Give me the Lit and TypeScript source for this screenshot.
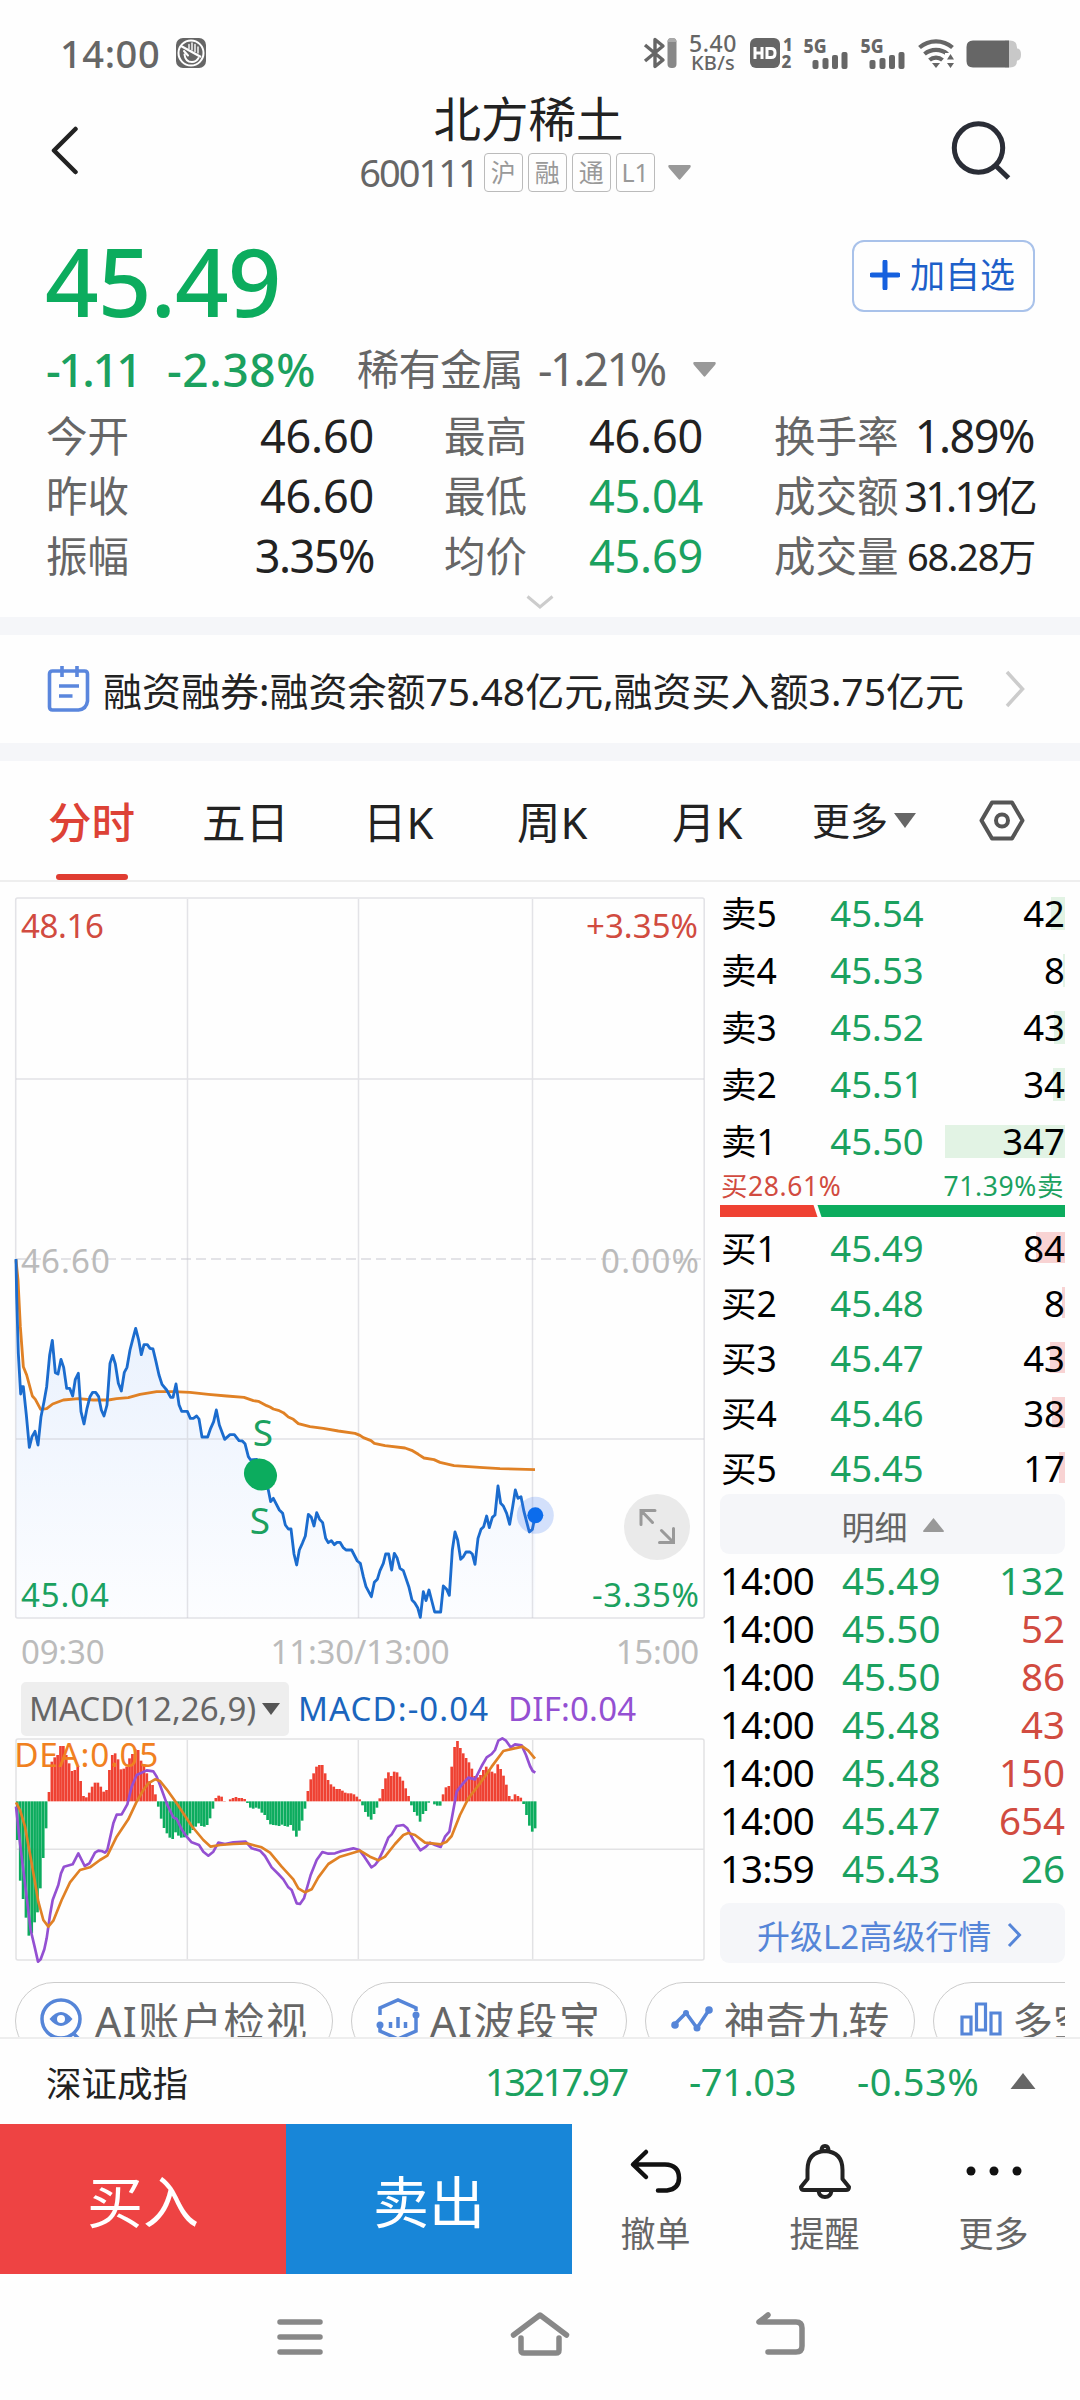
import { LitElement, html, css, svg } from "lit";
import { customElement } from "lit/decorators.js";

type Pair = [number, number];

const parse = (s: string, dx = 0): Pair[] =>
  s.trim().split(/\s+/).map((p) => {
    const [x, y] = p.split(",").map(Number);
    return [x + dx, y] as Pair;
  });
const join = (pts: Pair[]) => pts.map((p) => p.join(",")).join(" ");

// Series are stored in third-of-a-pixel units; the afternoon part starts at x = 810.
const PRICE = [
  ...parse(`48,87 50,200 55,370 62,492 66,470 70,470 79,555 88,652 96,620 105,604 114,645 123,560 132,515 140,470
149,375 157,331 166,428 174,432 183,388 191,412 200,475 209,475 218,498 226,448 235,430 243,545 252,582 261,535
270,500 278,487 287,487 296,500 304,540 312,558 321,525 330,400 338,376 346,402 355,460 364,483 373,427 381,412
390,360 399,325 407,295 416,330 424,374 432,344 442,344 450,355 459,357 468,395 477,435 486,463 500,480 512,502
519,502 528,462 537,524 545,544 562,544 571,565 580,565 590,558 597,567 606,621 623,621 632,595 641,575 649,540
658,585 674,628 690,614 703,614 717,632 727,633 735,641 745,680 752,690 770,688 788,735 805,780`),
  ...parse(`2,815 10,805 28,840 38,850 46,885 55,897 63,897 72,972 80,1005 88,960 97,940 106,918 115,853 124,862
132,888 140,848 149,868 158,878 167,925 175,938 184,932 193,944 201,937 210,937 219,952 228,960 245,960 262,993
271,1000 280,1040 288,1070 304,1100 313,1057 322,1048 330,1022 340,1000 347,972 356,972 365,1020 373,970 381,983
390,1015 400,1022 417,1072 426,1110 434,1118 443,1133 451,1162 460,1085 468,1112 477,1080 494,1146 512,1146
520,1068 530,1078 538,1096 547,960 555,906 563,930 572,988 580,980 588,966 600,966 607,972 615,1003 624,925
633,898 641,890 650,858 658,893 667,862 675,855 684,768 692,820 700,828 710,850 719,883 728,830 736,780 744,805
753,800 762,845 778,906 787,898 796,856`, 810),
];
const AVERAGE = [
  ...parse(`48,90 54,150 61,290 70,410 80,435 97,498 106,508 122,538 140,536 158,522 190,510 235,506 280,510
325,510 350,506 385,503 420,493 470,485 520,485 570,487 625,493 680,498 732,502 760,512 775,514 800,527`),
  ...parse(`0,531 10,537 25,541 40,548 55,561 70,568 85,581 120,590 160,595 205,603 255,610 270,616 280,623
303,632 313,640 345,647 405,654 425,661 445,673 462,684 492,689 510,697 552,707 640,713 690,716 795,719`, 810),
];
const DIF = [
  ...parse(`48,410 60,520 75,640 92,780 105,835 114,875 122,868 133,838 140,805 150,735 158,690 175,645 183,610
192,590 218,583 235,550 254,588 268,580 285,548 295,542 305,543 315,548 322,540 340,460 350,434 365,433 382,403
395,350 410,315 440,301 460,304 470,320 480,345 500,400 520,442 530,447 545,478 560,500 575,517 597,525 610,545
625,557 640,545 655,518 675,522 700,517 737,515 755,535 780,542 795,558 815,592 835,612`),
  ...parse(`40,628 55,652 65,660 80,700 90,702 102,685 122,615 140,570 157,546 175,551 195,550 215,543 250,535
268,540 283,560 304,592 315,585 325,572 340,540 355,503 365,493 380,468 400,465 412,475 430,510 451,541 468,530
480,518 495,525 512,531 525,500 538,485 550,420 560,365 575,345 595,323 615,328 635,288 650,262 665,252 675,240
685,212 697,205 708,212 722,232 735,223 755,226 768,255 780,288 788,303 796,308`, 810),
];
const DEA = [
  ...parse(`48,397 60,420 75,470 95,580 115,695 130,750 145,770 160,752 185,690 210,637 240,600 270,592 300,570
322,557 350,500 385,448 410,395 430,360 445,340 465,328 480,333 500,358 530,400 575,468 610,510 632,530 660,525
700,522 740,520 785,532`),
  ...parse(`0,548 35,590 70,628 85,655 105,667 125,658 145,622 175,582 210,560 270,542 300,560 325,571 345,560
375,522 400,495 415,489 435,495 465,518 512,523 530,515 545,498 570,435 595,385 630,340 665,290 700,243 730,236
758,230 775,242 795,266`, 810),
];
const ZERO = 394;
const BAR = 8.63;
const HISTOGRAM = `510 632 687 743 797 790 757 727 655 564 475
366 275 262 255 228 228 255 280 303 300 290 333 378 382 368 350 338 338 350 365 360 300 255 250 268 298 296 290 265
252 238 240 272 285 310 333 345 373
410 446 474 490 503 507 487 497 503 502 497 490 480 470 460 468 470 465 445 416
384 377 380 393 394 388 384 381 384 384 387
399 413 416 413 416 428 435 450 463 465 466 468 464 468 470 465 482 500 482 452 416
363 328 310 290 285 285 310 330 343 350 357 357 362 368 370 370 373 380 388
406 426 440 449 432 413
385 357 325 307 318 305 307 320 332 355 378
406 426 437 455 432 423 398 394 403 407 407
373 352 348 290 231 213 234 250 264 277 296 318 322 315 300 290 298 305 310 283 297 317 344 378 388 373 378 383
402 435 467 485 475`.split(/\s+/).map(Number);

const SELLS = [
  ["卖5", "45.54", "42", 14], ["卖4", "45.53", "8", 2], ["卖3", "45.52", "43", 11],
  ["卖2", "45.51", "34", 12], ["卖1", "45.50", "347", 120],
] as const;
const BUYS = [
  ["买1", "45.49", "84", 29], ["买2", "45.48", "8", 3], ["买3", "45.47", "43", 15],
  ["买4", "45.46", "38", 13], ["买5", "45.45", "17", 6],
] as const;
const TRADES = [
  ["14:00", "45.49", "132", "g"], ["14:00", "45.50", "52", "r"], ["14:00", "45.50", "86", "r"],
  ["14:00", "45.48", "43", "r"], ["14:00", "45.48", "150", "r"], ["14:00", "45.47", "654", "r"],
  ["13:59", "45.43", "26", "g"],
] as const;

const base = css`
  * { box-sizing: border-box; }
  .g { color: #1ba15f; }
  .r { color: #d14b40; }
  svg { display: block; flex: none; }
`;

@customElement("status-bar")
class StatusBar extends LitElement {
  static styles = [base, css`
    :host { display: flex; height: 90px; padding: 16px 58px 0 60px; align-items: center; color: #666; }
    .time { font-size: 38px; font-weight: 500; line-height: 40px; letter-spacing: 0.6px; width: 116px; }
    .spacer { flex: 1; }
    .rate { width: 52px; margin: 0 11px 0 10px; display: flex; flex-direction: column; align-items: center; font-size: 23px; line-height: 20px; font-weight: 500; letter-spacing: 0.6px; }
    .unit { font-size: 20px; letter-spacing: 0.2px; }
    text { font-family: "Noto Sans", sans-serif; font-weight: 800; }
  `];
  signal() {
    return svg`<text x="0" y="16" font-size="19" textLength="23" lengthAdjust="spacingAndGlyphs">5G</text>
      <rect x="9" y="23" width="6" height="9" rx="2"/><rect x="19" y="21" width="6" height="11" rx="2"/>
      <rect x="28.5" y="18" width="6" height="14" rx="2"/><rect x="38" y="15" width="6" height="17" rx="2"/>`;
  }
  render() {
    return html`
      <div class="time">14:00</div>
      <svg width="30" height="30" viewBox="0 0 30 30">
        <rect width="30" height="30" rx="7" fill="#666"/>
        <circle cx="15" cy="15" r="12.500" fill="none" stroke="#fff" stroke-width="2"/>
        <path d="M5 8 25 19" stroke="#fff" stroke-width="2.200"/>
        <path d="M13 10.500V6.500M16 12V5M19 13.500V6.500M22 15V9" fill="none" stroke="#fff" stroke-width="1.400" stroke-linecap="round"/>
        <path d="M8 13l4 4.500M8.500 16.500c.5 5 3.500 7.500 7.500 7.500 3 0 5-1.500 6.500-4" fill="none" stroke="#fff" stroke-width="2" stroke-linecap="round"/>
      </svg>
      <div class="spacer"></div>
      <svg width="34" height="32" viewBox="0 0 34 32">
        <path d="M2 8 20 23 12 29.500V2.500L20 9 2 24" fill="none" stroke="#666" stroke-width="3.400" stroke-linejoin="round"/>
        <rect x="24.500" y="1" width="9" height="30" rx="4" fill="#888"/><path d="M24.500 5q0-4 4.500-4t4.500 4z" fill="#aaa"/>
      </svg>
      <div class="rate"><span>5.40</span><span class="unit">KB/s</span></div>
      <svg width="44" height="32" viewBox="0 0 44 32" fill="#666">
        <rect y="1" width="30" height="30" rx="6"/>
        <path d="M5 10v12M12 10v12M5 16h7M17 10v12M16 11.500h5q4 0 4 4v1q0 4-4 4h-4" fill="none" stroke="#fff" stroke-width="3"/>
        <text x="33" y="14" font-size="17">1</text><text x="31.500" y="31" font-size="17">2</text>
      </svg>
      <svg width="57" height="32" viewBox="-9.500 0 57 32" fill="#666">${this.signal()}</svg>
      <svg width="57" height="32" viewBox="-9.500 0 57 32" fill="#666">${this.signal()}</svg>
      <svg width="49" height="32" viewBox="-10 0 49 32" fill="none" stroke="#666" stroke-width="4.200">
        <path d="M1.500 10.500a25 25 0 0 1 33 0M6.500 17a18 18 0 0 1 23 0M11.500 23a10 10 0 0 1 13 0"/>
        <path d="M14 26h8l-4 5z" fill="#666" stroke="none"/><path d="M27 16h10v16H27z" fill="#fff" stroke="none"/>
        <path d="M29 22.500h7L32.500 17zM29 26h7l-3.500 5z" fill="#666" stroke="none"/>
      </svg>
      <svg width="65" height="32" viewBox="-8 0 65 32">
        <path d="M40 3.500h5q7 0 7 7v1h1q3 1 3 6t-3 6h-1q0 7-7 7h-5z" fill="#c8c8c8"/>
        <path d="M8 3.500h36v27H8q-6.500 0-6.500-6.500V10q0-6.500 6.500-6.500z" fill="#666"/>
      </svg>`;
  }
}

@customElement("stock-header")
class StockHeader extends LitElement {
  static styles = [base, css`
    :host { display: block; }
    .bar { height: 120px; display: flex; justify-content: space-between; padding: 0 69px 0 50px; }
    .mid { width: 500px; display: flex; flex-direction: column; align-items: center; padding-left: 26px; }
    .title { font-size: 47.500px; line-height: 57px; color: #222; }
    .sub { display: flex; align-items: center; gap: 5px; height: 50px; color: #666; font-size: 38px; line-height: 40px; margin: 0 0 0 -7px; }
    .code { letter-spacing: -2px; margin-right: 1px; }
    .tag { width: 39px; height: 39px; border: 1.500px solid #bbb; border-radius: 4px; color: #999; font-size: 25px; line-height: 36px; text-align: center; }
    .tri { margin-left: 8px; }
    .back { margin-top: 36px; } .search { margin-top: 34px; overflow: visible; }
    .price { display: flex; justify-content: space-between; padding: 30px 45px 0 45px; height: 126px; }
    .last { color: #0cac5e; font-size: 94px; font-weight: 500; line-height: 84px; letter-spacing: -1px; margin-top: -1px; }
    .add { width: 183px; height: 72px; border: 2px solid #a9c2ea; border-radius: 12px; display: flex; align-items: center; gap: 10px; padding-left: 16px; color: #1d5fc9; font-size: 35px; line-height: 60px; padding-bottom: 2px; }
    .chg { display: flex; align-items: center; height: 70px; padding: 0 0 4px 46px; font-size: 46px; line-height: 60px; }
    .d1 { width: 121px; letter-spacing: -2.400px; font-weight: 500; }
    .d2 { width: 190px; letter-spacing: 0.600px; font-weight: 500; }
    .ind { color: #666; font-size: 42px; margin-right: 15px; letter-spacing: -0.500px; }
    .ip { color: #666; font-size: 45px; letter-spacing: -2.400px; width: 155px; }
    .stats { display: grid; grid-template-columns: 328px 329px 331px; justify-content: start; grid-auto-rows: 60px; padding: 0 46px; height: 211px; }
    .cell { display: flex; justify-content: space-between; line-height: 60px; font-size: 45px; color: #222; white-space: nowrap; }
    .cell.b { padding-left: 70px; } .cell.c { padding-left: 71px; }
    .cell .l { font-size: 41.500px; color: #666; }
    .cell .g { color: #1ba15f; }
    .v { letter-spacing: -0.200px; }
    .v.p { letter-spacing: -1.500px; }
    .v.m { font-size: 41.500px; letter-spacing: -2.800px; margin-right: -1px; } .v.s { font-size: 38px; letter-spacing: -1.200px; margin-right: -1px; }
    .more { display: flex; justify-content: center; grid-column: 1 / 4; margin-top: 9px; height: 16px; }
    .band { height: 18px; background: #f5f6f9; }
    .notice { height: 108px; display: flex; align-items: center; padding: 0 55px 0 47px; font-size: 39px; color: #222; }
    .notice span { flex: 1; margin-left: 13px; white-space: nowrap; letter-spacing: 0; }
  `];
  cell(cls: string, l: string, v: string, vc = "") {
    return html`<div class="cell ${cls}"><span class="l">${l}</span><span class="v ${vc}">${v}</span></div>`;
  }
  render() {
    return html`
      <div class="bar">
        <svg class="back" width="30" height="50" viewBox="0 0 30 50"><path d="M25.500 3 4 24.500 25.500 46" fill="none" stroke="#222" stroke-width="4.500" stroke-linecap="round" stroke-linejoin="round"/></svg>
        <div class="mid">
          <div class="title">北方稀土</div>
          <div class="sub"><span class="code">600111</span><span class="tag">沪</span><span class="tag">融</span><span class="tag">通</span><span class="tag">L1</span>
            <svg class="tri" width="23" height="15"><path d="M1 0H22Q23.500 1 22 3L12.500 14Q11.500 15.500 10.500 14L1 3Q-.5 1 1 0" fill="#999"/></svg>
          </div>
        </div>
        <svg class="search" width="60" height="60" viewBox="0 0 60 60" fill="none" stroke="#2a2d36" stroke-width="5"><circle cx="27.500" cy="24" r="24.200"/><path d="M44 41 57.500 54"/></svg>
      </div>
      <div class="price">
        <div class="last">45.49</div>
        <div class="add"><svg width="30" height="30"><path d="M15 2v26M2 15h26" stroke="#1560de" stroke-width="5" stroke-linecap="round"/></svg>加自选</div>
      </div>
      <div class="chg">
        <span class="d1 g">-1.11</span><span class="d2 g">-2.38%</span><span class="ind">稀有金属</span><span class="ip">-1.21%</span>
        <svg width="23" height="15"><path d="M1 0H22Q23.500 1 22 3L12.500 14Q11.500 15.500 10.500 14L1 3Q-.5 1 1 0" fill="#999"/></svg>
      </div>
      <div class="stats">
        ${this.cell("", "今开", "46.60")}${this.cell("b", "最高", "46.60")}${this.cell("c", "换手率", "1.89%", "p")}
        ${this.cell("", "昨收", "46.60")}${this.cell("b", "最低", "45.04", "g")}${this.cell("c", "成交额", "31.19亿", "m")}
        ${this.cell("", "振幅", "3.35%", "p")}${this.cell("b", "均价", "45.69", "g")}${this.cell("c", "成交量", "68.28万", "s")}
        <div class="more"><svg width="28" height="16"><path d="M1.500 1.500 14 12 26.500 1.500" fill="none" stroke="#ccc" stroke-width="3"/></svg></div>
      </div>
      <div class="band"></div>
      <div class="notice">
        <svg width="43" height="48" viewBox="0 0 43 48" fill="none" stroke="#5a86dd" stroke-width="3.600"><path d="M2.500 9q0-3 3-3h32q3 0 3 3v27q-1 8-9 9h-26q-3 0-3-3z"/><path d="M15 1v11M30 1v11M12 21h20M12 31h13.500"/></svg>
        <span>融资融券:融资余额75.48亿元,融资买入额3.75亿元</span>
        <svg width="20" height="38"><path d="M2 2 17.500 19 2 36" fill="none" stroke="#ccc" stroke-width="3.500"/></svg>
      </div>
      <div class="band"></div>`;
  }
}

@customElement("chart-panel")
class ChartPanel extends LitElement {
  static styles = [base, css`
    :host { display: block; width: 705px; }
    .price, .macd { overflow: visible; }
    text { font-family: "Noto Sans", sans-serif; font-size: 33px; }
    .mark { font-size: 37px; }
    .dea { font-size: 100px; }
    .axis { display: flex; justify-content: space-between; height: 54px; padding: 0 6px 0 21px; line-height: 60px; font-size: 33px; color: #bbb; letter-spacing: -0.200px; }
    .legend { display: flex; height: 64px; padding: 6px 0 0 21px; font-size: 33px; line-height: 54px; }
    .chip { width: 268px; height: 54px; border-radius: 5px; background: #eee; color: #666; padding: 0 8px; display: flex; align-items: center; justify-content: space-between; }
    .m { color: #1b65bd; margin-left: 9px; width: 210px; letter-spacing: 1.100px; } .d { color: #9450d2; letter-spacing: 0.200px; }
  `];
  render() {
    const area = `${join(PRICE)} 1606,1164 48,1164`;
    return html`
      <svg class="price" width="705" height="740" viewBox="0 0 705 740">
        <defs><linearGradient id="fill" x1="0" y1="0" x2="0" y2="1"><stop offset="0" stop-color="#e6effd"/><stop offset="1" stop-color="#fcfdff"/></linearGradient></defs>
        <g transform="translate(0 348) scale(.33333)">
          <polygon points=${area} fill="url(#fill)"/>
        </g>
        <g fill="none" stroke="#c8c8cf" stroke-opacity=".5" stroke-width="1.500">
          <rect x="15.700" y="16" width="688.500" height="720" rx="2"/>
          <path d="M187.500 17v719M358.500 17v719M532.500 17v719M16 197h688M16 557h688"/>
          <path d="M16 377h688" stroke-dasharray="10 5" stroke-width="2"/>
        </g>
        <g transform="translate(0 348) scale(.33333)" fill="none" stroke-linejoin="round">
          <polyline points=${join(AVERAGE)} stroke="#e08125" stroke-width="8.500"/>
          <polyline points=${join(PRICE)} stroke="#1b6cce" stroke-width="8.500"/>
        </g>
        <text x="21" y="56" fill="#d14b40" textLength="83">48.16</text>
        <text x="698" y="56" fill="#d14b40" text-anchor="end" textLength="112">+3.35%</text>
        <text x="21" y="391" fill="#bbb" textLength="89">46.60</text>
        <text x="699" y="391" fill="#bbb" text-anchor="end" textLength="98">0.00%</text>
        <text x="21" y="725" fill="#1ba15f" textLength="88">45.04</text>
        <text x="699" y="725" fill="#1ba15f" text-anchor="end" textLength="107">-3.35%</text>
        <ellipse cx="260.500" cy="592.500" rx="17" ry="15.500" transform="rotate(35 260.500 592.500)" fill="#0cac5e"/>
        <text class="mark" x="263" y="564" text-anchor="middle" fill="#1ba15f">S</text>
        <text class="mark" x="260" y="652" text-anchor="middle" fill="#1ba15f">S</text>
        <circle cx="535.300" cy="633.300" r="18.500" fill="#3b78f0" fill-opacity=".22"/>
        <circle cx="535.300" cy="633.300" r="8" fill="#0c6cec"/>
        <circle cx="657" cy="645" r="33" fill="#eaeaea"/>
        <path d="M655 628.500H641V642.500M642 629.500 652.500 640.500M659.500 660.500H673.500V646.500M672.500 659.500 661.500 648.500" fill="none" stroke="#999" stroke-width="3" stroke-linecap="round"/>
      </svg>
      <div class="axis"><span>09:30</span><span>11:30/13:00</span><span>15:00</span></div>
      <div class="legend">
        <div class="chip">MACD(12,26,9)<svg width="20" height="13"><path d="M1 0h18L10 12z" fill="#555"/></svg></div>
        <span class="m">MACD:-0.04</span><span class="d">DIF:0.04</span>
      </div>
      <svg class="macd" width="705" height="230" viewBox="0 210 2115 690">
        <g fill="none" stroke="#e2e2e4" stroke-width="4.500">
          <rect x="48" y="207" width="2064" height="663" rx="6"/><path d="M562 210v658M1075 210v658M1598 210v658M48 538h2064"/>
        </g>
        ${HISTOGRAM.map((y, i) => svg`<rect x=${48 + i * BAR} y=${Math.min(y, ZERO)} width=${BAR - 0.6} height=${Math.abs(y - ZERO)} fill=${y < ZERO ? "#ef4132" : "#0cac5e"}/>`)}
        <g fill="none" stroke-width="8" stroke-linejoin="round">
          <polyline points=${join(DIF)} stroke="#9450d2"/>
          <polyline points=${join(DEA)} stroke="#e08125"/>
        </g>
        <text class="dea" x="43" y="291" fill="#f08020" textLength="432">DEA:0.05</text>
      </svg>`;
  }
}

@customElement("order-book")
class OrderBook extends LitElement {
  static styles = [base, css`
    :host { display: block; width: 345px; color: #000; }
    .sell { padding-top: 2px; height: 287px; } .buy { padding-top: 3px; height: 277px; }
    .row { display: grid; grid-template-columns: 91px 132px 1fr; height: 57px; align-items: center; font-size: 36.500px; line-height: 50px; }
    .buy .row { height: 55.100px; }
    .k { font-size: 35.500px; padding-left: 1px; }
    .p { text-align: center; }
    .q { position: relative; text-align: right; }
    .bg { position: absolute; right: 0; top: 9px; height: 33px; background: #e2f3e4; }
    .buy .bg { background: #f8d3d3; height: 31px; }
    .n { position: relative; }
    .pct { display: flex; justify-content: space-between; font-size: 26.500px; line-height: 34px; height: 36px; padding: 0 1px; letter-spacing: 0.600px; }
    .toggle { height: 60px; border-radius: 9px; background: #f5f6f9; display: flex; justify-content: center; align-items: center; gap: 15px; font-size: 33px; color: #666; padding-top: 3px; }
    .trades { padding-top: 3px; height: 349px; }
    .t { display: grid; grid-template-columns: 122px 104px 1fr; height: 48px; line-height: 47px; font-size: 38.500px; }
    .t span:first-child { letter-spacing: -0.900px; }
    .t span:last-child { text-align: right; }
    .up { height: 60px; border-radius: 9px; background: #f5f6f9; display: flex; align-items: center; padding: 4px 0 0 37px; gap: 16px; color: #5585d8; font-size: 33px; }
  `];
  row(r: readonly [string, string, string, number]) {
    return html`<div class="row"><span class="k">${r[0]}</span><span class="p g">${r[1]}</span><span class="q"><span class="bg" style="width:${r[3]}px"></span><span class="n">${r[2]}</span></span></div>`;
  }
  render() {
    return html`
      <div class="sell">${SELLS.map((r) => this.row(r))}</div>
      <div class="pct"><span class="r">买28.61%</span><span class="g">71.39%卖</span></div>
      <svg class="ratio" width="345" height="12"><path d="M0 0H93.500L97.500 12H0z" fill="#ef4132"/><path d="M97.500 0H345V12H101.500z" fill="#0cac5e"/></svg>
      <div class="buy">${BUYS.map((r) => this.row(r))}</div>
      <div class="toggle">明细<svg width="21" height="15"><path d="M10.500 0 21 13Q21 14 20 14H1Q0 14 0 13z" fill="#999"/></svg></div>
      <div class="trades">${TRADES.map((t) => html`<div class="t"><span>${t[0]}</span><span class="g">${t[1]}</span><span class=${t[3]}>${t[2]}</span></div>`)}</div>
      <div class="up">升级L2高级行情<svg width="15" height="26"><path d="M2 2 12.500 13 2 24" fill="none" stroke="#5585d8" stroke-width="3"/></svg></div>`;
  }
}

@customElement("app-root")
class AppRoot extends LitElement {
  static styles = [base, css`
    :host { display: flex; flex-direction: column; width: 1080px; height: 2400px; overflow: hidden; background: #fefefe; font-family: "Noto Sans", "Noto Sans CJK SC", sans-serif; }
    .tabs { height: 121px; display: flex; padding-left: 48px; font-size: 43.500px; line-height: 123px; color: #222; border-bottom: 2px solid #eee; flex: none; }
    .tab { white-space: nowrap; }
    .on { color: #dd4236; font-weight: 500; position: relative; }
    .on::after { content: ""; position: absolute; left: 8px; bottom: 0; width: 72px; height: 6px; border-radius: 3px; background: #e03c31; }
    .t1 { width: 154px; } .t2 { width: 161px; } .t3 { width: 154px; } .t4 { width: 155px; } .t5 { width: 140px; }
    .t6 { font-size: 38px; display: flex; align-items: center; gap: 5px; width: 167px; }
    .hex { margin-top: 39px; }
    .main { display: flex; gap: 15px; height: 1089px; flex: none; }
    .pills { display: flex; gap: 18px; margin: 11px 15px 0 15px; height: 55px; overflow: hidden; flex: none; }
    .pill { flex: none; height: 78px; border: 1.500px solid #ccc; border-radius: 39px; display: flex; align-items: center; padding: 0 0 5px 24px; font-size: 41px; color: #666; white-space: nowrap; gap: 10px; }
    .p1 { width: 318px; gap: 13px; letter-spacing: 1.600px; } .p2 { width: 276px; letter-spacing: 1.700px; } .p3 { width: 270px; padding-left: 24px; letter-spacing: 0.400px; } .p4 { width: 270px; padding-left: 26px; }
    .index { height: 87px; border-top: 2px solid #eee; display: grid; grid-template-columns: 439px 204px 168px 153px 30px; padding-left: 46px; align-items: center; font-size: 38px; flex: none; padding-bottom: 1px; }
    .index .n { font-size: 35.500px; color: #222; }
    .i1 { letter-spacing: -2.600px; } .i2 { letter-spacing: -0.400px; } .i3 { letter-spacing: 0.500px; }
    .actions { display: flex; height: 150px; flex: none; }
    .btn { width: 286px; background: #ee4343; color: #fff; font-size: 56px; line-height: 155px; text-align: center; }
    .btn.s { background: #1886d8; }
    .act { width: 169px; display: flex; flex-direction: column; align-items: center; color: #666; font-size: 35px; line-height: 50px; padding-top: 19px; gap: 8px; }
    .acts { display: flex; margin-left: -1px; }
    .nav { flex: 1; display: flex; justify-content: center; gap: 185px; padding-top: 36px; }
  `];
  render() {
    return html`
      <status-bar></status-bar>
      <stock-header></stock-header>
      <div class="tabs">
        <div class="tab on t1">分时</div><div class="tab t2">五日</div><div class="tab t3">日K</div><div class="tab t4">周K</div><div class="tab t5">月K</div>
        <div class="tab t6">更多<svg width="24" height="16"><path d="M1 0H23L12 15z" fill="#666"/></svg></div>
        <svg class="hex" width="46" height="41" viewBox="0 0 46 41" fill="none" stroke="#555" stroke-width="4"><path d="M13 2.500H33L43.500 20.500 33 38.500H13L2.500 20.500z" stroke-linejoin="round"/><circle cx="23" cy="20.500" r="6"/></svg>
      </div>
      <div class="main"><chart-panel></chart-panel><order-book></order-book></div>
      <div class="pills">
        <div class="pill p1"><svg width="42" height="44" viewBox="0 0 42 44" fill="none" stroke="#5585d8" stroke-width="3.500"><circle cx="21" cy="22" r="19"/><path d="M9.500 22Q21 8 32.500 22 21 36 9.500 22z" fill="#5585d8" stroke="none"/><circle cx="21" cy="22" r="4" fill="#fff" stroke="none"/><path d="M33 36l6 6"/></svg>AI账户检视</div>
        <div class="pill p2"><svg width="44" height="44" viewBox="0 0 44 44" fill="none" stroke="#5585d8" stroke-width="3.500"><path d="M4 18V11L22 3 40 11V14M40 21v13L22 42 4 34V30"/><circle cx="40" cy="18" r="3.500" fill="#5585d8" stroke="none"/><circle cx="4" cy="28" r="3.500" fill="#5585d8" stroke="none"/><path d="M14.500 25v6M22 20v11M29.500 25v6"/></svg>AI波段宝</div>
        <div class="pill p3"><svg width="44" height="30" viewBox="0 0 44 30" fill="none" stroke="#5585d8" stroke-width="3.500"><path d="M4 21 16 9 27 24 39 6"/><g fill="#5585d8" stroke="none"><circle cx="5" cy="21" r="3.800"/><circle cx="16" cy="9" r="3"/><circle cx="27" cy="24" r="3.500"/><circle cx="39" cy="6" r="3.800"/></g></svg>神奇九转</div>
        <div class="pill p4"><svg width="42" height="36" viewBox="0 0 42 36" fill="none" stroke="#5585d8" stroke-width="3.200"><path d="M2 16H11V33H2zM16.500 3H25.500V29H16.500zM31 12H40V33H31z"/></svg>多空</div>
      </div>
      <div class="index">
        <span class="n">深证成指</span><span class="i1 g">13217.97</span><span class="i2 g">-71.03</span><span class="i3 g">-0.53%</span>
        <svg width="26" height="16"><path d="M13 0 25.500 16H.5z" fill="#666"/></svg>
      </div>
      <div class="actions">
        <div class="btn">买入</div><div class="btn s">卖出</div>
        <div class="acts">
          <div class="act"><svg width="54" height="58" viewBox="0 0 54 58" fill="none" stroke="#111" stroke-width="4.500" stroke-linecap="round" stroke-linejoin="round"><path d="M17 9 4 21.500 17 34M5 21.500H36Q50 22 50 35 50 46 38 47.500H29"/></svg>撤单</div>
          <div class="act"><svg width="54" height="58" viewBox="0 0 54 58" fill="none" stroke="#222" stroke-width="4" stroke-linejoin="round"><path d="M27 8Q9.500 9 9.500 27V36L3 44Q3 47 6 47H48Q51 47 51 44L44.500 36V27Q44.500 9 27 8zM23.500 8q0-5 3.500-5t3.500 5M20.500 48q1 6 6.500 6t6.500-6"/></svg>提醒</div>
          <div class="act"><svg width="56" height="58" viewBox="0 0 56 58" fill="#111"><circle cx="5" cy="28" r="4.500"/><circle cx="28" cy="28" r="4.500"/><circle cx="51" cy="28" r="4.500"/></svg>更多</div>
        </div>
      </div>
      <div class="nav">
        <svg width="50" height="50" viewBox="0 0 50 50" stroke="#888" stroke-width="5.500" stroke-linecap="round"><path d="M5 12h40M5 27h40M5 42h40"/></svg>
        <svg width="60" height="50" viewBox="0 0 60 50" fill="none" stroke="#888" stroke-width="5.500" stroke-linecap="round" stroke-linejoin="round"><path d="M3.500 25 30 5 56.500 25M11 28V40Q11 43 14 43H46Q49 43 49 40V28"/></svg>
        <svg width="50" height="50" viewBox="0 0 50 50" fill="none" stroke="#888" stroke-width="5.500" stroke-linecap="round" stroke-linejoin="round"><path d="M13 5 4 12H41Q47 12 47 18V36Q47 42 41 42H13"/></svg>
      </div>`;
  }
}
